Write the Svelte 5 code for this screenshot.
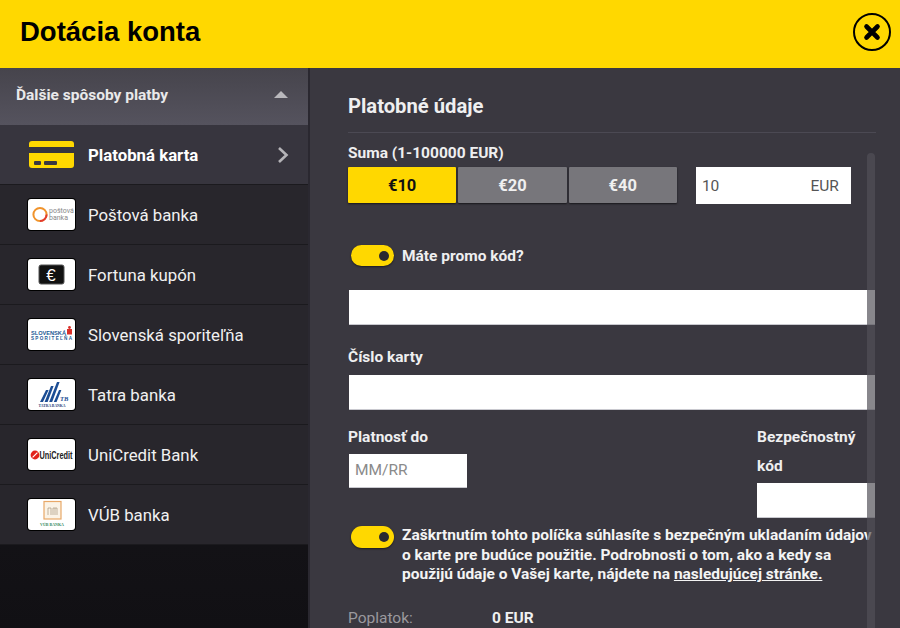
<script>
	const methods = [
		{ id: 'posta', label: 'Poštová banka' },
		{ id: 'fortuna', label: 'Fortuna kupón' },
		{ id: 'slsp', label: 'Slovenská sporiteľňa' },
		{ id: 'tatra', label: 'Tatra banka' },
		{ id: 'unicredit', label: 'UniCredit Bank' },
		{ id: 'vub', label: 'VÚB banka' }
	];
	const amounts = [10, 20, 40];
</script>

<div class="page">
	<header class="top">
		<h1>Dotácia konta</h1>
		<button class="close" aria-label="Zavrieť">
			<svg width="38" height="38" viewBox="0 0 38 38">
				<circle cx="19" cy="19" r="18" fill="none" stroke="#000" stroke-width="2" />
				<path d="M13.5 13.5 L24.5 24.5 M24.5 13.5 L13.5 24.5" stroke="#000" stroke-width="4.6" stroke-linecap="round" />
			</svg>
		</button>
	</header>

	<div class="body">
		<aside class="side">
			<div class="side-head">
				<span>Ďalšie spôsoby platby</span>
				<i class="tri"></i>
			</div>
			<div class="row active">
				<svg class="card" width="45" height="27" viewBox="0 0 45 27">
					<path d="M0 3 a3 3 0 0 1 3-3 h39 a3 3 0 0 1 3 3 v3 h-45z" fill="#ffd800" />
					<path d="M0 12 h45 v12 a3 3 0 0 1-3 3 h-39 a3 3 0 0 1-3-3z" fill="#ffd800" />
					<rect x="5" y="20" width="7" height="4" rx="1" fill="#3a3840" />
					<rect x="15" y="20" width="13" height="4" rx="1" fill="#3a3840" />
				</svg>
				<span class="name">Platobná karta</span>
				<svg class="chev" width="12" height="18" viewBox="0 0 12 18">
					<path d="M2 2 L9.5 9 L2 16" fill="none" stroke="#b5b4b8" stroke-width="2.6" />
				</svg>
			</div>
			{#each methods as m}
				<div class="row">
					<span class="logo">
						{#if m.id === 'posta'}
							<svg width="47" height="31" viewBox="0 0 47 31">
								<circle cx="12" cy="15.5" r="6.6" fill="none" stroke="#f0932b" stroke-width="2" />
								<path d="M12 22.1 a6.6 6.6 0 0 0 6.6-6.6" fill="none" stroke="#e23a30" stroke-width="2" />
								<text x="21" y="14" class="t-posta">poštová</text>
								<text x="21" y="21" class="t-posta">banka</text>
							</svg>
						{:else if m.id === 'fortuna'}
							<svg width="47" height="31" viewBox="0 0 47 31">
								<rect x="11" y="6" width="25" height="19" rx="2" fill="#111" stroke="#555" />
								<text x="23" y="21.5" class="t-euro">€</text>
							</svg>
						{:else if m.id === 'slsp'}
							<svg width="47" height="31" viewBox="0 0 47 31">
								<text x="3" y="15.5" class="t-slsp" textLength="35" lengthAdjust="spacingAndGlyphs">SLOVENSKÁ</text>
								<text x="3" y="21" class="t-slsp2" textLength="41" lengthAdjust="spacing">SPORITEĽŇA</text>
								<rect x="39" y="10" width="5" height="5.5" fill="#d9302a" />
								<circle cx="41.5" cy="8.5" r="1.4" fill="#d9302a" />
							</svg>
						{:else if m.id === 'tatra'}
							<svg width="47" height="31" viewBox="0 0 47 31">
								<path d="M12 23 L18 11 h2.6 L15 23z M16.6 23 L23 7 h2.6 L19.6 23z M21.2 23 L29 3 h2.6 L24.2 23z M25.8 23 L31 11 h2.4 L28.6 23z" fill="#1b4d94" />
								<text x="32" y="22" class="t-tb">TB</text>
								<text x="24" y="28" class="t-tatra" textLength="27" lengthAdjust="spacingAndGlyphs">TATRA BANKA</text>
							</svg>
						{:else if m.id === 'unicredit'}
							<svg width="47" height="31" viewBox="0 0 47 31">
								<circle cx="7" cy="16" r="4.4" fill="#e2231a" />
								<path d="M4.6 18.4 L9.4 13.6" stroke="#fff" stroke-width="1.2" />
								<text x="11.5" y="19.5" class="t-uni" textLength="33" lengthAdjust="spacingAndGlyphs">UniCredit</text>
							</svg>
						{:else}
							<svg width="47" height="31" viewBox="0 0 47 31">
								<rect x="16" y="2.5" width="17" height="17.5" fill="#fbf3e6" stroke="#e8a868" stroke-width="1.2" />
								<path d="M20 9 h3 v7 M20 9 v7 M25 9 h4 v7 M27 9 v7 M25 9 v7" fill="none" stroke="#a8957c" stroke-width="0.7" />
								<text x="24" y="26.5" class="t-vub" textLength="24" lengthAdjust="spacingAndGlyphs">VÚB BANKA</text>
							</svg>
						{/if}
					</span>
					<span class="name">{m.label}</span>
				</div>
			{/each}
		</aside>

		<main class="main">
			<h2>Platobné údaje</h2>
			<div class="form">
				<p class="label first">Suma (1-100000 EUR)</p>
				<div class="amounts">
					<div class="chips">
						{#each amounts as a, i}
							<button class="chip" class:on={i === 0}>€{a}</button>
						{/each}
					</div>
					<div class="amount-input"><span>10</span><span>EUR</span></div>
				</div>

				<div class="promo">
					<span class="toggle"><i></i></span>
					<span class="label">Máte promo kód?</span>
				</div>
				<div class="input"></div>

				<p class="label card-label">Číslo karty</p>
				<div class="input"></div>

				<div class="split">
					<div class="expiry">
						<p class="label">Platnosť do</p>
						<div class="input small">MM/RR</div>
					</div>
					<div class="cvc">
						<p class="label">Bezpečnostný kód</p>
						<div class="input cvc-input"></div>
					</div>
				</div>

				<div class="consent">
					<span class="toggle"><i></i></span>
					<p>Zaškrtnutím tohto políčka súhlasíte s bezpečným ukladaním údajov o karte pre budúce použitie. Podrobnosti o tom, ako a kedy sa použijú údaje o Vašej karte, nájdete na <u>nasledujúcej stránke.</u></p>
				</div>

				<div class="fee">
					<span>Poplatok:</span>
					<b>0 EUR</b>
				</div>
			</div>
			<div class="scrollbar"></div>
		</main>
	</div>
</div>

<style>
	:global(body) {
		margin: 0;
		background: #3a3840;
	}
	.page {
		width: 900px;
		height: 628px;
		overflow: hidden;
		display: flex;
		flex-direction: column;
		font-family: Roboto, "Liberation Sans", sans-serif;
		color: #fff;
	}
	.top {
		height: 68px;
		flex: none;
		background: #ffd800;
		display: flex;
		align-items: center;
		justify-content: space-between;
		padding: 0 9px 4px 20px;
		box-sizing: border-box;
	}
	h1 {
		margin: 0;
		font: 700 27.5px "Liberation Sans", Arial, sans-serif;
		color: #000;
	}
	.close {
		border: 0;
		background: none;
		padding: 0;
		display: flex;
	}
	.body {
		flex: 1;
		min-height: 0;
		display: flex;
	}
	.side {
		width: 310px;
		flex: none;
		box-sizing: border-box;
		border-right: 2px solid #2a2830;
		background: linear-gradient(#1f1d22, #111014);
	}
	.side-head {
		height: 57px;
		box-sizing: border-box;
		padding: 0 20px 4px 16px;
		display: flex;
		align-items: center;
		justify-content: space-between;
		background: linear-gradient(#46444c, #55535e);
		font-size: 15.5px;
		font-weight: 700;
		color: #e9e9ea;
	}
	.tri {
		width: 0;
		height: 0;
		border-left: 7px solid transparent;
		border-right: 7px solid transparent;
		border-bottom: 7px solid #b9b8bc;
	}
	.row {
		height: 60px;
		box-sizing: border-box;
		display: flex;
		align-items: center;
		padding: 0 20px 0 28px;
		background: #28262c;
		border-bottom: 1px solid #1b1a1e;
		font-size: 16.8px;
		color: #f1f1f1;
	}
	.row.active {
		background: #37353e;
		font-weight: 700;
		color: #fff;
	}
	.row.active .card {
		margin-left: 1px;
	}
	.name {
		margin-left: 13px;
		flex: 1;
	}
	.row.active .name {
		margin-left: 14px;
	}
	.chev {
		margin-right: -1px;
	}
	.logo {
		width: 47px;
		height: 31px;
		background: #fff;
		border-radius: 3px;
		box-shadow: 0 0 0 1px #000;
		display: block;
		flex: none;
	}
	.logo svg {
		display: block;
	}
	.t-posta {
		font: 7px Roboto, sans-serif;
		fill: #888;
	}
	.t-euro {
		font: 400 17px "Liberation Sans", sans-serif;
		fill: #fff;
		text-anchor: middle;
	}
	.t-slsp {
		font: 700 6px "Liberation Sans", sans-serif;
		fill: #1c5a94;
	}
	.t-slsp2 {
		font: 700 4.6px "Liberation Sans", sans-serif;
		fill: #1c5a94;
	}
	.t-tb {
		font: italic 700 6.5px "Liberation Serif", serif;
		fill: #1b4d94;
	}
	.t-tatra {
		font: 700 3.8px "Liberation Serif", serif;
		fill: #1b3f7a;
		text-anchor: middle;
	}
	.t-uni {
		font: 700 10.5px "Liberation Sans", sans-serif;
		fill: #222;
	}
	.t-vub {
		font: 700 4.4px "Liberation Serif", serif;
		fill: #2f8a5c;
		text-anchor: middle;
	}
	.main {
		flex: 1;
		min-width: 0;
		position: relative;
		overflow: hidden;
		background: #3a3840;
		padding: 0 24px 0 38px;
	}
	h2 {
		margin: 0;
		height: 65px;
		box-sizing: border-box;
		padding-top: 26px;
		font-size: 20.2px;
		line-height: 24px;
		font-weight: 700;
		color: #efeff0;
		border-bottom: 1px solid #4b4953;
	}
	.form {
		margin-right: 1px;
	}
	.label {
		margin: 0;
		font-size: 15.5px;
		line-height: 20px;
		font-weight: 700;
		color: #efeff0;
	}
	.first {
		padding-top: 10px;
		height: 15px;
		margin-bottom: 9px;
	}
	.amounts {
		display: flex;
		gap: 19px;
	}
	.chips {
		display: flex;
		gap: 2px;
	}
	.chip {
		width: 108.3px;
		height: 36px;
		border: 0;
		padding: 0;
		border-radius: 1px;
		background: #77767b;
		box-shadow: 0 1px 2px rgba(0, 0, 0, 0.6);
		font: 700 16.5px Roboto, sans-serif;
		color: #f0f0f0;
	}
	.chip.on {
		background: #ffd800;
		color: #111;
	}
	.amount-input {
		width: 155px;
		height: 37px;
		box-sizing: border-box;
		background: #fff;
		display: flex;
		align-items: center;
		justify-content: space-between;
		padding: 0 12px 0 6px;
		font-size: 15.5px;
		color: #555;
	}
	.promo {
		display: flex;
		align-items: center;
		margin-top: 41px;
		height: 21px;
		padding-left: 3px;
	}
	.toggle {
		width: 43px;
		height: 21px;
		flex: none;
		border-radius: 11px;
		background: #ffd800;
		box-shadow: 0 1px 2px rgba(0, 0, 0, 0.5);
		display: flex;
		align-items: center;
		justify-content: flex-end;
		padding-right: 5px;
		box-sizing: border-box;
		margin-right: 8px;
	}
	.toggle i {
		width: 10px;
		height: 10px;
		border-radius: 50%;
		background: #2b2930;
	}
	.input {
		height: 35px;
		background: #fff;
		margin-left: 1px;
		margin-top: 24px;
		box-sizing: border-box;
		border-bottom: 1px solid #c9c9cf;
	}
	.card-label {
		margin-top: 22px;
	}
	.card-label + .input {
		margin-top: 8px;
	}
	.split {
		display: flex;
		justify-content: space-between;
		margin-top: 17px;
		height: 99px;
	}
	.input.small {
		width: 118px;
		height: 34px;
		margin-top: 7px;
		font-size: 15.5px;
		line-height: 33px;
		color: #8a8a8a;
		padding-left: 6px;
	}
	.cvc {
		width: 118px;
		margin-top: -4px;
	}
	.cvc .label {
		line-height: 29px;
		width: 110px;
	}
	.input.cvc-input {
		margin: 2px 0 0;
	}
	.consent {
		display: flex;
		align-items: flex-start;
		padding-left: 3px;
		margin-right: -6px;
	}
	.consent .toggle {
		height: 22px;
	}
	.consent p {
		margin: 0;
		flex: 1;
		font-size: 15.5px;
		line-height: 19.5px;
		font-weight: 700;
		color: #f4f4f4;
	}
	.fee {
		display: flex;
		margin-top: 23px;
		font-size: 15.5px;
		line-height: 20px;
	}
	.fee span {
		width: 144px;
		color: #9a999e;
	}
	.fee b {
		color: #f0f0f0;
	}
	.scrollbar {
		position: absolute;
		right: 25px;
		top: 85px;
		bottom: 0;
		width: 8px;
		background: rgba(81, 80, 88, 0.685);
		border-radius: 4px 4px 0 0;
	}
</style>
